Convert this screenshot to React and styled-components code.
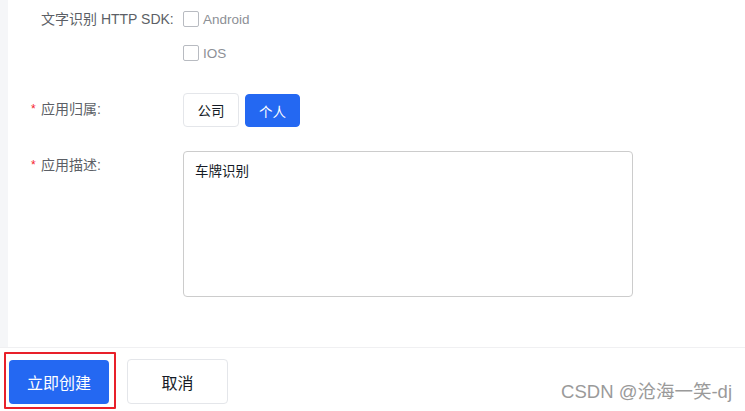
import React from "react";
import styled, { createGlobalStyle } from "styled-components";

const Global = createGlobalStyle`
  html, body { margin: 0; padding: 0; background: #fff; }
  body { font-family: "Liberation Sans", "Noto Sans CJK SC", sans-serif; width: 745px; height: 411px; overflow: hidden; }
`;

const Page = styled.div`
  display: flex;
  flex-direction: column;
  width: 745px;
  height: 411px;
`;

const Body = styled.div`
  display: flex;
  flex: 1;
  min-height: 0;
`;

const Strip = styled.div`
  width: 8px;
  background: #f5f6f8;
`;

const Form = styled.div`
  flex: 1;
  background: #fff;
  display: flex;
  flex-direction: column;
  padding: 4px 0 0 0;
`;

const Row = styled.div`
  display: grid;
  grid-template-columns: 175px 1fr;
  margin-bottom: ${(p) => p.$mb || 0}px;
`;

const Label = styled.div`
  display: flex;
  align-items: flex-start;
  padding-top: ${(p) => p.$pt || 0}px;
  font-size: 14px;
  color: #5c5f66;
  line-height: 22px;
`;

const Star = styled.span`
  color: #f5222d;
  width: 10px;
  margin-left: 23px;
  font-size: 12px;
`;

const Spacer = styled.span`
  width: 33px;
`;

const Field = styled.div`
  display: flex;
  flex-direction: column;
  gap: ${(p) => p.$gap || 0}px;
`;

const Check = styled.label`
  display: flex;
  align-items: center;
  height: 30px;
  gap: 4px;
  font-size: 13.5px;
  color: #8d9096;
`;

const Box = styled.span`
  width: 14px;
  height: 14px;
  border: 1px solid #b8bbc1;
  border-radius: 2px;
  box-sizing: content-box;
  background: #fff;
`;

const Seg = styled.div`
  display: flex;
  gap: 6px;
`;

const SegBtn = styled.button`
  width: ${(p) => p.$w}px;
  height: ${(p) => p.$h || 34}px;
  margin-top: ${(p) => p.$mt || 0}px;
  border-radius: 4px;
  border: 1px solid ${(p) => (p.$active ? "#2468f2" : "#e4e6ea")};
  background: ${(p) => (p.$active ? "#2468f2" : "#fff")};
  color: ${(p) => (p.$active ? "#fff" : "#151b26")};
  font-size: 13.5px;
  font-family: "Noto Sans CJK SC", sans-serif;
  padding: 0;
`;

const TextArea = styled.div`
  width: 450px;
  height: 146px;
  margin-top: 1px;
  box-sizing: border-box;
  border: 1px solid #ccc;
  border-radius: 4px;
  padding: 8px 11px;
  font-size: 13.5px;
  color: #151b26;
  line-height: 20px;
  font-family: "Noto Sans CJK SC", sans-serif;
`;

const Footer = styled.div`
  height: 63px;
  border-top: 1px solid #f0f0f2;
  background: #fff;
  display: flex;
  align-items: center;
  padding-left: 4px;
  position: relative;
`;

const Highlight = styled.div`
  border: 2px solid #e8202a;
  padding: 6px 5px 3px 3px;
  border-radius: 1px;
  margin-top: 2px;
`;

const Primary = styled.button`
  width: 100px;
  height: 44px;
  border: none;
  border-radius: 4px;
  background: #2468f2;
  color: #fff;
  font-size: 16px;
  font-family: "Noto Sans CJK SC", sans-serif;
  display: block;
`;

const Secondary = styled.button`
  width: 101px;
  height: 45px;
  margin-left: 11px;
  margin-top: 4px;
  border: 1px solid #e4e6ea;
  border-radius: 4px;
  background: #fff;
  color: #151b26;
  font-size: 16px;
  font-family: "Noto Sans CJK SC", sans-serif;
`;

const Watermark = styled.div`
  position: absolute;
  right: 13px;
  top: 29px;
  font-size: 18.5px;
  color: #9a9a9a;
`;

export default function App() {
  return (
    <Page>
      <Global />
      <Body>
        <Strip />
        <Form>
          <Row $mb={25}>
            <Label $pt={4}>
              <Spacer />
              文字识别 HTTP SDK:
            </Label>
            <Field $gap={4}>
              <Check>
                <Box />
                Android
              </Check>
              <Check>
                <Box />
                IOS
              </Check>
            </Field>
          </Row>
          <Row $mb={23}>
            <Label $pt={5}>
              <Star>*</Star>
              应用归属:
            </Label>
            <Seg>
              <SegBtn $w={56}>公司</SegBtn>
              <SegBtn $w={55} $active $mt={1} $h={33}>
                个人
              </SegBtn>
            </Seg>
          </Row>
          <Row>
            <Label $pt={4}>
              <Star>*</Star>
              应用描述:
            </Label>
            <TextArea>车牌识别</TextArea>
          </Row>
        </Form>
      </Body>
      <Footer>
        <Highlight>
          <Primary>立即创建</Primary>
        </Highlight>
        <Secondary>取消</Secondary>
        <Watermark>CSDN @沧海一笑-dj</Watermark>
      </Footer>
    </Page>
  );
}
